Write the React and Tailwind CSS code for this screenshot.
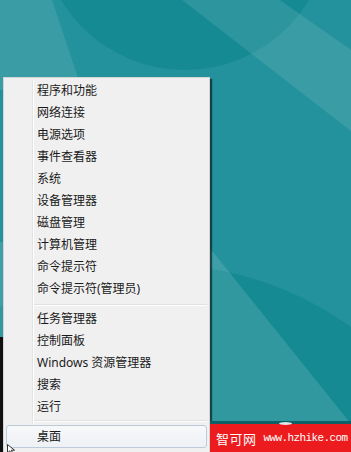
import React from "react";

const group1 = ["程序和功能","网络连接","电源选项","事件查看器","系统","设备管理器","磁盘管理","计算机管理","命令提示符","命令提示符(管理员)"];
const group2 = ["任务管理器","控制面板","Windows 资源管理器","搜索","运行"];

function Row({ label }) {
  return (
    <div className="flex h-[22px] items-center">
      <div className="h-full w-[29px] shrink-0 border-r border-r-[#e2e3e3]" />
      <div className="h-full w-px shrink-0 bg-white" />
      <span className="pl-[3px] text-[12px] leading-[22px] text-[#1a1a1a]">{label}</span>
    </div>
  );
}

function Sep({ h, top }) {
  return (
    <div className={`flex ${h}`}>
      <div className="h-full w-[29px] shrink-0 border-r border-r-[#e2e3e3]" />
      <div className="h-full w-px shrink-0 bg-white" />
      <div className={`flex-1 pr-[2px] ${top}`}>
        <div className="h-px bg-[#e0e0e0]" />
        <div className="h-px bg-white" />
      </div>
    </div>
  );
}

export default function App() {
  return (
    <div className="relative h-[452px] w-[351px] overflow-hidden bg-[#24929c]" style={{ fontFamily: '"Noto Sans", "Noto Sans CJK SC", sans-serif' }}>
      <svg className="absolute inset-0" width="351" height="452" viewBox="0 0 351 452">
        <rect x="0" y="0" width="351" height="452" fill="#24929c" />
        <circle cx="185" cy="-75" r="145" fill="#168a93" />
        <circle cx="160" cy="590" r="325" fill="#168a93" />
        <polygon points="0,0 52,0 82,90 0,90" fill="#ffffff" fillOpacity="0.1" />
        <polygon points="200,-56 351,50 351,131 150,-25" fill="#ffffff" fillOpacity="0.1" />
        <polygon points="205,242 351,424 351,452 0,452 0,242" fill="#ffffff" fillOpacity="0.12" />
      </svg>

      <div className="absolute left-0 top-[337px] h-[115px] w-[3px] bg-[#101010]" />

      <div className="absolute left-[3px] top-[77px] h-[390px] w-[207px] border border-[#d4d4d4] bg-[#f0f0f0] pt-[2px] shadow-[2px_2px_1px_rgba(0,0,0,0.55)]">
        {group1.map((l) => <Row key={l} label={l} />)}
        <Sep h="h-[8px]" top="pt-[4px]" />
        {group2.map((l) => <Row key={l} label={l} />)}
        <Sep h="h-[7px]" top="pt-[2px]" />
        <div className="ml-[2px] mr-[2px] flex h-[23px] items-center rounded-[3px] border border-[#bccbd9] bg-gradient-to-b from-[#f7f8fa] to-[#eef1f5]">
          <span className="pl-[30px] text-[12px] leading-[22px] text-[#1a1a1a]">桌面</span>
        </div>
      </div>

      <svg className="absolute left-[7px] top-[444px]" width="10" height="10" viewBox="0 0 10 10">
        <path d="M0.5 0.5 L0.5 9 L2.8 6.8 L4.6 10 L6 9.3 L4.3 6.2 L7.5 6.2 Z" fill="#ffffff" stroke="#000000" strokeWidth="0.8" />
      </svg>

      <div className="absolute left-[210px] top-[421px] h-[31px] w-[141px] border-t-[3px] border-t-[#0f5f66] bg-[#ec1c1e]">
        <div className="flex h-full items-center pl-[6px] text-white">
          <span className="text-[13px] leading-none tracking-[0.5px]" style={{ fontFamily: '"Noto Sans CJK SC", sans-serif' }}>智可网</span>
          <span className="ml-[7px] text-[11px] leading-none tracking-[-0.6px]" style={{ fontFamily: '"Liberation Mono", monospace' }}>www.hzhike.com</span>
        </div>
      </div>
      <div className="absolute left-[279px] top-[422px] h-[3px] w-[13px] rounded-[50%] bg-[#dfe8ea]" />
    </div>
  );
}
